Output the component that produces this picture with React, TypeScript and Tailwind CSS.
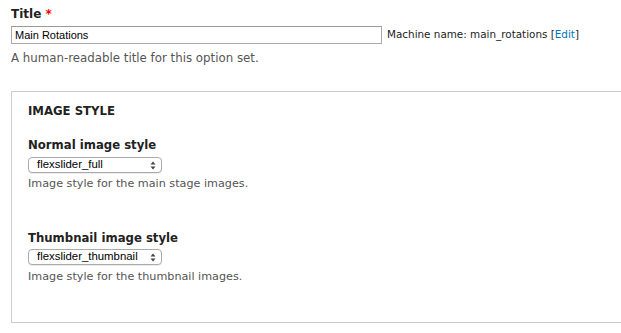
import React from 'react';

const font = { fontFamily: '"DejaVu Sans", "Noto Sans", sans-serif' };

const SelectBox: React.FC<{ value: string; width: string }> = ({ value, width }) => (
  <div
    className={`flex items-center justify-between h-[16px] ${width} rounded-[4px] border border-[#aaa] bg-white pl-[8px] pr-[5px] shadow-[0_1px_1px_rgba(0,0,0,0.08)]`}
  >
    <span className="text-[11.4px] leading-none text-black font-['Liberation_Sans',sans-serif]">{value}</span>
    <svg width="6" height="9" viewBox="0 0 6 9">
      <path d="M3 0.5 L5.5 3.5 H0.5 Z" fill="#444" />
      <path d="M3 8.5 L5.5 5.5 H0.5 Z" fill="#444" />
    </svg>
  </div>
);

export default function App() {
  return (
    <div className="w-[621px] h-[333px] overflow-hidden bg-white text-[#333]" style={font}>
      <div className="pl-[11px] pt-[6px]">
        <label className="block text-[12px] font-bold leading-[16px] text-[#222]">
          Title <span className="text-[#e00]">*</span>
        </label>
        <div className="flex items-center mt-[4px]">
          <div className="w-[371px] h-[18px] border border-[#aaa] border-t-[#999] bg-white flex items-center pl-[3px]">
            <span className="text-[11px] leading-none text-black font-['Liberation_Sans',sans-serif]">Main Rotations</span>
          </div>
          <span className="ml-[5px] text-[10.4px] text-[#222]">
            Machine name: main_rotations <span>[</span><a className="text-[#0074bd]">Edit</a><span>]</span>
          </span>
        </div>
        <p className="mt-[6px] text-[11.8px] leading-[16px] text-[#555]">A human-readable title for this option set.</p>
      </div>

      <fieldset className="mt-[25px] ml-[11px] w-[640px] h-[232px] border border-[#ccc] pl-[16px] pt-[11px]">
        <h3 className="text-[11.7px] font-bold leading-[16px] text-[#222]">IMAGE STYLE</h3>

        <div className="mt-[18px]">
          <label className="block text-[11.7px] font-bold leading-[16px] text-[#222]">Normal image style</label>
          <div className="mt-[4px]">
            <SelectBox value="flexslider_full" width="w-[134px]" />
          </div>
          <p className="mt-[3px] text-[11.2px] leading-[16px] text-[#555]">Image style for the main stage images.</p>
        </div>

        <div className="mt-[38px]">
          <label className="block text-[11.7px] font-bold leading-[16px] text-[#222]">Thumbnail image style</label>
          <div className="mt-[3px]">
            <SelectBox value="flexslider_thumbnail" width="w-[134px]" />
          </div>
          <p className="mt-[4px] text-[11.2px] leading-[16px] text-[#555]">Image style for the thumbnail images.</p>
        </div>
      </fieldset>
    </div>
  );
}
